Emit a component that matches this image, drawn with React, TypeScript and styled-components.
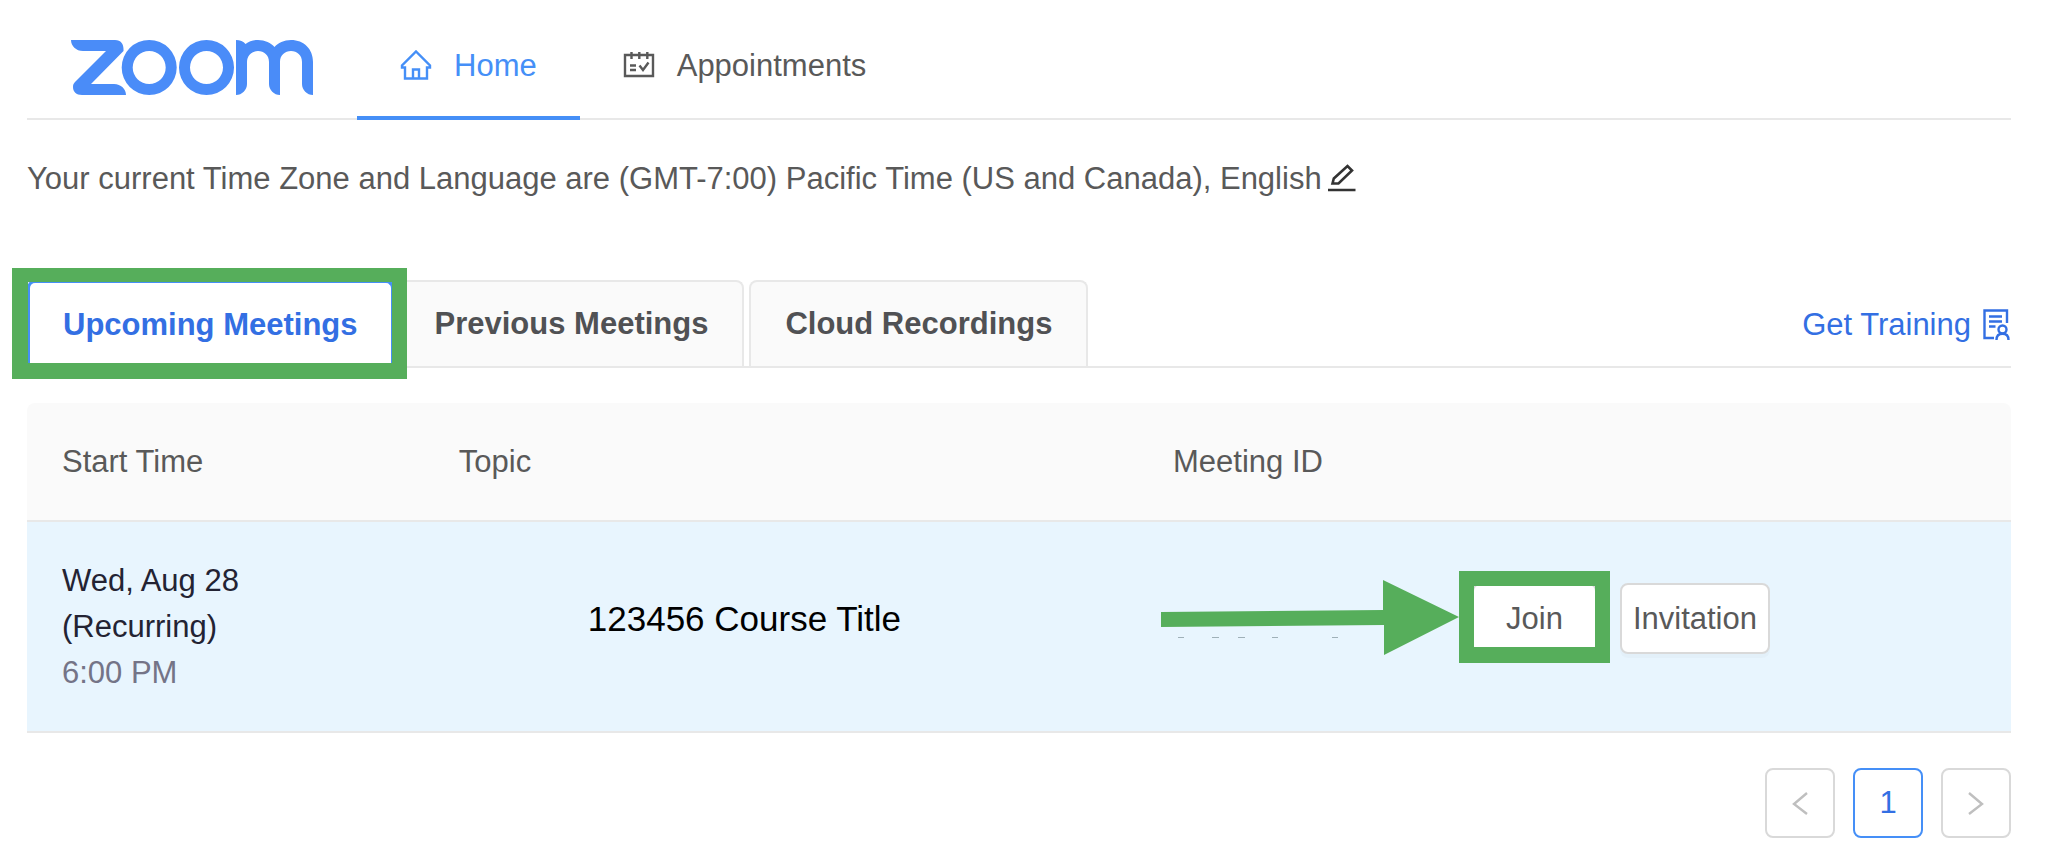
import React from "react";
import styled, { createGlobalStyle, css } from "styled-components";

const GlobalStyle = createGlobalStyle`
  *, *::before, *::after { box-sizing: border-box; }
  body {
    margin: 0;
    background: #fff;
    color: #595959;
    font-family: "Liberation Sans", Arial, Helvetica, sans-serif;
    font-size: 31px;
    line-height: 46px;
  }
  button { font: inherit; color: inherit; cursor: pointer; }
  a { color: inherit; text-decoration: none; }
`;

const Page = styled.div`
  padding: 0 34px 24px 27px;
`;

const Header = styled.header`
  display: flex;
  height: 120px;
  border-bottom: 2px solid #e8e8e8;
`;

const LogoLink = styled.a`
  display: block;
  width: 330px;
  padding: 40px 0 0 44px;

  svg { display: block; }
`;

const Nav = styled.nav`
  display: flex;
`;

const NavLink = styled.a<{ $active?: boolean }>`
  display: flex;
  align-items: center;
  gap: 22px;
  height: 120px;
  padding: 16px 43px 0;
  color: ${(p) => (p.$active ? "#458ff7" : "#595959")};
  border-bottom: 4px solid ${(p) => (p.$active ? "#458ff7" : "transparent")};
`;

const Locale = styled.p`
  display: flex;
  align-items: center;
  gap: 6px;
  margin: 36px 0 0;
`;

const IconButton = styled.button`
  display: flex;
  padding: 0;
  border: 0;
  background: none;
  color: #333;
`;

const TabBar = styled.div`
  display: flex;
  justify-content: space-between;
  margin-top: 78px;
  border-bottom: 2px solid #e8e8e8;
`;

const Tabs = styled.div`
  display: flex;
  gap: 5px;
`;

const marker = css`
  z-index: 1;

  &::after {
    content: "";
    position: absolute;
    border: solid #56ae5b;
    pointer-events: none;
  }
`;

const Tab = styled.button<{ $active?: boolean }>`
  position: relative;
  height: 86px;
  padding: 0 34px;
  border: 2px solid #e8e8e8;
  border-bottom: 0;
  border-radius: 8px 8px 0 0;
  background: #fafafa;
  color: #505154;
  font-weight: 700;
  white-space: nowrap;
  ${(p) =>
    p.$active &&
    css`
      padding: 0 33px;
      border-width: 3px;
      border-bottom: 0;
      border-color: #458ff7;
      background: #fff;
      color: #336fe3;
      ${marker}

      &::after {
        inset: -15px -16px -13px -18px;
        border-width: 14px 15px 16px 16px;
      }
    `}
`;

const TrainingLink = styled.a`
  display: flex;
  align-items: center;
  gap: 12px;
  padding-top: 3px;
  color: #336fe3;
`;

const Table = styled.table`
  width: 100%;
  margin-top: 35px;
  border-collapse: separate;
  border-spacing: 0;
  table-layout: fixed;
`;

const HeadCell = styled.th<{ $width: string }>`
  width: ${(p) => p.$width};
  height: 119px;
  padding: 0 35px;
  background: #fafafa;
  border-bottom: 2px solid #e8e8e8;
  font-weight: 400;
  text-align: left;

  &:first-child { border-top-left-radius: 8px; }
  &:last-child { border-top-right-radius: 8px; }
`;

const Cell = styled.td`
  height: 211px;
  padding: 0 35px;
  background: #e8f5fe;
  border-bottom: 2px solid #e8e8e8;
  color: #232333;
`;

const TopicCell = styled(Cell)`
  padding: 0 108px 16px 35px;
  color: #000;
  font-size: 35px;
  text-align: center;
`;

const ActionCell = styled(Cell)`
  padding: 0 35px 16px;
`;

const Time = styled.div`
  color: #747487;
`;

const Actions = styled.div`
  display: flex;
  align-items: center;
  gap: 23px;
`;

const Pointer = styled.svg`
  flex: none;
  margin: 0 -10px 2px -12px;
`;

const ActionButton = styled.button<{ $marked?: boolean }>`
  position: relative;
  height: 71px;
  padding: 0 ${(p) => (p.$marked ? 32 : 11)}px;
  border: 2px solid #d9d9d9;
  border-radius: 8px;
  background: #fff;
  box-shadow: 0 4px 0 rgba(0, 0, 0, 0.02);
  color: #595959;
  ${(p) =>
    p.$marked &&
    css`
      ${marker}

      &::after {
        inset: -14px -15px -11px;
        border-width: 15px 15px 16px;
      }
    `}
`;

const Pagination = styled.nav`
  display: flex;
  justify-content: flex-end;
  gap: 18px;
  margin-top: 35px;
`;

const PageButton = styled.button<{ $current?: boolean }>`
  display: flex;
  align-items: center;
  justify-content: center;
  width: 70px;
  height: 70px;
  padding: 0;
  border: 2px solid ${(p) => (p.$current ? "#458ff7" : "#d9d9d9")};
  border-radius: 8px;
  background: #fff;
  color: ${(p) => (p.$current ? "#336fe3" : "#bfbfbf")};
`;

const Logo = () => (
  <svg width="242" height="55" viewBox="0 0 242 55" fill="#4a8cf8" role="img" aria-label="Zoom">
    <path d="M0 0H44C50 0 52.500 4 52.500 9V11L20 44H43C50 44 55 49 55 55H11C5 55 2 51.500 2 47C2 45 2.500 43.500 4 42L35 11H12C5 11 0 6 0 0Z" />
    <path fillRule="evenodd" d="M78.200 0a27.500 27.500 0 1 0 0 55a27.500 27.500 0 1 0 0-55ZM78.200 11a16.500 16.500 0 1 1 0 33a16.500 16.500 0 1 1 0-33Z" />
    <path fillRule="evenodd" d="M135.500 0a27.500 27.500 0 1 0 0 55a27.500 27.500 0 1 0 0-55ZM135.500 11a16.500 16.500 0 1 1 0 33a16.500 16.500 0 1 1 0-33Z" />
    <path d="M165 0C169 0 172.500 1.500 174.500 4C178 1.500 182 0 187 0C194 0 200 3 203.500 7C207 3 213 0 220 0C233 0 242 9 242 22V55C236 55 231 50 231 44V22C231 15 226 11 220 11C214 11 209 15 209 22V55C203 55 198 50 198 44V22C198 15 193 11 187 11C181 11 176 15 176 22V44C176 50 171 55 165 55Z" />
  </svg>
);

const HomeIcon = () => (
  <svg width="32" height="32" viewBox="0 0 32 32" fill="none" stroke="currentColor" strokeWidth="2.4" aria-hidden="true">
    <path d="M2 17.500V15.500L16 1.500L30 15.500V17.500H27V28.500H5V17.500ZM13 28V19.500H19V28" />
  </svg>
);

const CalendarIcon = () => (
  <svg width="32" height="32" viewBox="0 0 32 32" fill="none" stroke="currentColor" strokeWidth="2.4" aria-hidden="true">
    <path d="M2 5H30V26H2ZM8.500 2V9M16.300 2V9M24.300 2V9M7 15.500H13M7 20H13M16.500 15.500L20 20L25.500 12.500" />
  </svg>
);

const EditIcon = () => (
  <svg width="28" height="30" viewBox="0 0 28 30" fill="none" stroke="currentColor" strokeWidth="2.600" aria-hidden="true">
    <path d="M4.500 19.500L5.800 14.500L19.500 2L24 6.500L10.500 19.500ZM0 26H27.500" />
  </svg>
);

const TrainingIcon = () => (
  <svg width="28" height="32" viewBox="0 0 28 32" fill="none" stroke="currentColor" strokeWidth="2.400" aria-hidden="true">
    <path d="M11 29H1.500V1.500H24V14M6 7.500H19M6 12.500H19M6 17.500H12.500" />
    <circle cx="19.500" cy="20.500" r="4" />
    <path d="M13.500 31C13.500 27 16 24.800 19.500 24.800S25.500 27 25.500 31" />
  </svg>
);

const Chevron = ({ flip }: { flip?: boolean }) => (
  <svg width="20" height="26" viewBox="0 0 20 26" fill="none" stroke="currentColor" strokeWidth="2.400" aria-hidden="true">
    <path d={flip ? "M3 3L16 14L3 24" : "M17 3L4 14L17 24"} />
  </svg>
);

export default function App() {
  return (
    <>
      <GlobalStyle />
      <Page>
        <Header>
          <LogoLink href="#" aria-label="Zoom"><Logo /></LogoLink>
          <Nav>
            <NavLink href="#" $active><HomeIcon />Home</NavLink>
            <NavLink href="#"><CalendarIcon />Appointments</NavLink>
          </Nav>
        </Header>
        <main>
          <Locale>
            Your current Time Zone and Language are (GMT-7:00) Pacific Time (US and Canada), English
            <IconButton aria-label="Edit time zone and language"><EditIcon /></IconButton>
          </Locale>
          <TabBar>
            <Tabs role="tablist">
              <Tab role="tab" aria-selected="true" $active>Upcoming Meetings</Tab>
              <Tab role="tab" aria-selected="false">Previous Meetings</Tab>
              <Tab role="tab" aria-selected="false">Cloud Recordings</Tab>
            </Tabs>
            <TrainingLink href="#">Get Training<TrainingIcon /></TrainingLink>
          </TabBar>
          <Table>
            <thead>
              <tr>
                <HeadCell $width="20%">Start Time</HeadCell>
                <HeadCell $width="36%">Topic</HeadCell>
                <HeadCell $width="44%">Meeting ID</HeadCell>
              </tr>
            </thead>
            <tbody>
              <tr>
                <Cell>
                  <div>Wed, Aug 28</div>
                  <div>(Recurring)</div>
                  <Time>6:00 PM</Time>
                </Cell>
                <TopicCell>123456 Course Title</TopicCell>
                <ActionCell>
                  <Actions>
                    <Pointer width="298" height="76" viewBox="0 0 298 76" aria-hidden="true">
                      <path fill="#56ae5b" d="M0 32L222 30V0L298 37L223 75V45L0 47Z" />
                      <path stroke="#9fb0b8" d="M17 57.5h6M51 57.5h7M77 57.5h7M111 57.5h6M171 57.5h6" />
                    </Pointer>
                    <ActionButton $marked>Join</ActionButton>
                    <ActionButton>Invitation</ActionButton>
                  </Actions>
                </ActionCell>
              </tr>
            </tbody>
          </Table>
          <Pagination aria-label="Pages">
            <PageButton aria-label="Previous page"><Chevron /></PageButton>
            <PageButton $current aria-current="page">1</PageButton>
            <PageButton aria-label="Next page"><Chevron flip /></PageButton>
          </Pagination>
        </main>
      </Page>
    </>
  );
}
